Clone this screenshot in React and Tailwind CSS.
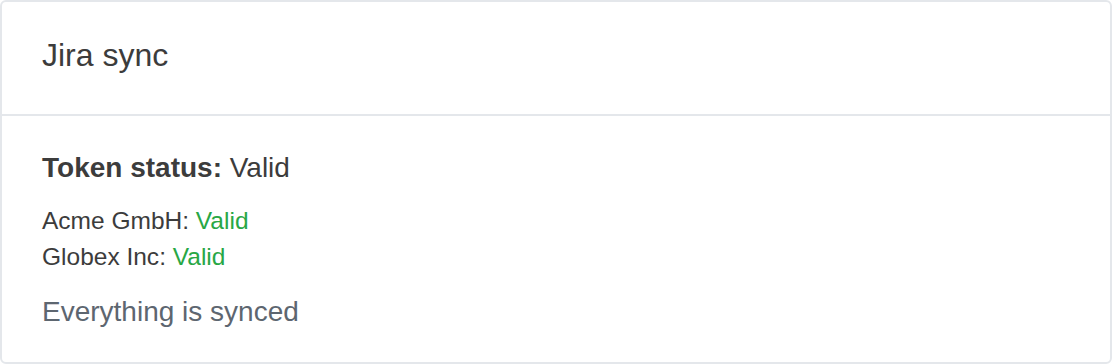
import React from 'react';

const companies = [
  { name: 'Acme GmbH', status: 'Valid' },
  { name: 'Globex Inc', status: 'Valid' },
];

export default function App() {
  return (
    <div className="w-[1112px] h-[364px] bg-white" style={{ fontFamily: '"Liberation Sans", Arial, sans-serif' }}>
      <div className="h-full border-2 border-[#e4e7eb] rounded-[6px] flex flex-col text-[#3c3c3c]">
        {/* Header */}
        <div className="h-[114px] shrink-0 flex items-center px-[40px] pb-[6px] border-b-2 border-[#e4e7eb]">
          <h5 className="text-[32px] leading-[38px]">Jira sync</h5>
        </div>

        {/* Body */}
        <div className="px-[40px] pt-[35px]">
          <p className="text-[28px] leading-[34px]">
            <span className="font-bold">Token status:</span> Valid
          </p>
          <div className="mt-[18px]">
            {companies.map((c) => (
              <p key={c.name} className="text-[24.5px] leading-[36px]">
                {c.name}: <span className="text-[#28a745]">{c.status}</span>
              </p>
            ))}
          </div>
          <p className="mt-[20px] text-[28px] leading-[34px] text-[#5d6670]">Everything is synced</p>
        </div>
      </div>
    </div>
  );
}
